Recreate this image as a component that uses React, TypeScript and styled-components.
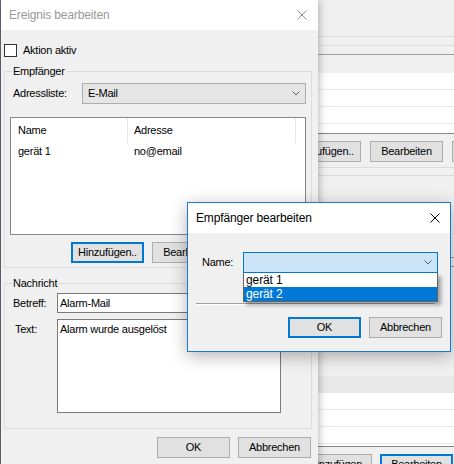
import React from "react";
import styled, { createGlobalStyle } from "styled-components";

const GlobalStyle = createGlobalStyle`
  html, body { margin: 0; padding: 0; background: #f0f0f0; }
  * { box-sizing: border-box; }
`;

const Desktop = styled.div`
  position: relative;
  width: 454px;
  height: 464px;
  overflow: hidden;
  background: #f0f0f0;
  font-family: "Liberation Sans", Arial, sans-serif;
  font-size: 11px;
  line-height: 13px;
  letter-spacing: -0.25px;
  color: #000;
`;

/* ---------- background window ---------- */
const BackWindow = styled.div`
  position: absolute;
  left: 0;
  top: 0;
  width: 480px;
  height: 464px;
  background: #f0f0f0;
  border-left: 1px solid #6e6e7c;
  display: flex;
  flex-direction: column;
`;

const BackLine = styled.div<{ $mt: number; $dark?: boolean }>`
  flex-shrink: 0;
  height: 1px;
  margin-top: ${(p) => p.$mt}px;
  background: ${(p) => (p.$dark ? "#a0a0a0" : "#dadada")};
`;

const BackBand = styled.div<{ $h: number; $mt?: number; $bg: string }>`
  flex-shrink: 0;
  height: ${(p) => p.$h}px;
  margin-top: ${(p) => p.$mt ?? 0}px;
  background: ${(p) => p.$bg};
`;

const BackList = styled.div<{ $filler: number }>`
  flex-shrink: 0;
  background: #fff;
  border-bottom: 1px solid #828790;
  display: flex;
  flex-direction: column;
  padding-bottom: ${(p) => p.$filler}px;
`;

const BackListRow = styled.div`
  height: 17px;
  border-bottom: 1px solid #e8e8e8;
`;

const ButtonRow = styled.div<{ $mt: number; $pl?: number; $pr?: number; $gap: number; $end?: boolean }>`
  flex-shrink: 0;
  display: flex;
  justify-content: ${(p) => (p.$end ? "flex-end" : "flex-start")};
  gap: ${(p) => p.$gap}px;
  margin-top: ${(p) => p.$mt}px;
  padding-left: ${(p) => p.$pl ?? 0}px;
  padding-right: ${(p) => p.$pr ?? 0}px;
`;

const Button = styled.div<{ $default?: boolean }>`
  flex-shrink: 0;
  width: 73px;
  height: 21px;
  background: #e1e1e1;
  border: ${(p) => (p.$default ? "2px solid #0078d7" : "1px solid #adadad")};
  display: flex;
  align-items: center;
  justify-content: center;
  white-space: nowrap;
`;

/* ---------- windows ---------- */
const MainDialog = styled.div`
  position: absolute;
  left: 1px;
  top: 0;
  width: 317px;
  height: 480px;
  background: #f0f0f0;
  box-shadow: 0 0 9px rgba(0, 0, 0, 0.35);
  display: flex;
  flex-direction: column;
`;

const SubDialog = styled.div`
  position: absolute;
  left: 187px;
  top: 202px;
  width: 264px;
  height: 150px;
  background: #f0f0f0;
  border: 1px solid #1c78d0;
  box-shadow: 0 4px 16px rgba(0, 0, 0, 0.3);
  display: flex;
  flex-direction: column;
`;

const TitleBar = styled.div<{ $active?: boolean; $pr: number }>`
  flex-shrink: 0;
  height: 30px;
  background: #fff;
  display: flex;
  align-items: center;
  justify-content: space-between;
  padding: 0 ${(p) => p.$pr}px 0 8px;
  font-size: 12px;
  letter-spacing: -0.15px;
  color: ${(p) => (p.$active ? "#000" : "#999")};
`;

const CloseIcon = ({ color }: { color: string }) => (
  <svg width="10" height="10" viewBox="0 0 10 10">
    <path d="M0.5 0.5 L9.5 9.5 M9.5 0.5 L0.5 9.5" stroke={color} strokeWidth="1" fill="none" />
  </svg>
);

const Chevron = () => (
  <svg width="8" height="5" viewBox="0 0 8 5">
    <path d="M0.5 0.5 L4 4 L7.5 0.5" stroke="#606060" strokeWidth="1" fill="none" />
  </svg>
);

const MainBody = styled.div`
  display: flex;
  flex-direction: column;
  padding: 14px 6px 0 3px;
`;

const CheckRow = styled.div`
  display: flex;
  align-items: center;
  gap: 6px;
  height: 13px;
`;

const CheckBox = styled.div`
  width: 13px;
  height: 13px;
  border: 1px solid #333;
  background: #fff;
`;

const Group = styled.div<{ $mt: number; $pt: number; $pb: number }>`
  position: relative;
  margin-top: ${(p) => p.$mt}px;
  border: 1px solid #dcdcdc;
  padding: ${(p) => p.$pt}px 5px ${(p) => p.$pb}px 5px;
  display: flex;
  flex-direction: column;
`;

const GroupTitle = styled.span`
  position: absolute;
  top: -7px;
  left: 7px;
  padding: 0 1px;
  background: #f0f0f0;
`;

const FieldRow = styled.div<{ $top?: boolean; $mt?: number }>`
  display: flex;
  align-items: ${(p) => (p.$top ? "flex-start" : "center")};
  margin-top: ${(p) => p.$mt ?? 0}px;
`;

const FieldLabel = styled.div<{ $w: number; $pl: number; $pt?: number }>`
  flex-shrink: 0;
  width: ${(p) => p.$w}px;
  padding-left: ${(p) => p.$pl}px;
  padding-top: ${(p) => p.$pt ?? 0}px;
`;

const ComboBox = styled.div<{ $w: number; $h: number; $focus?: boolean }>`
  position: relative;
  width: ${(p) => p.$w}px;
  height: ${(p) => p.$h}px;
  background: ${(p) => (p.$focus ? "#cce4f7" : "#e5e5e5")};
  border: 1px solid ${(p) => (p.$focus ? "#0078d7" : "#adadad")};
  display: flex;
  align-items: center;
  justify-content: space-between;
  padding: 0 5px 0 5px;
`;

const Dropdown = styled.div`
  position: absolute;
  left: -1px;
  right: -1px;
  top: 100%;
  margin-top: 1px;
  background: #fff;
  border: 1px solid #646464;
  border-top: none;
  box-shadow: 3px 3px 4px rgba(0, 0, 0, 0.35);
  display: flex;
  flex-direction: column;
`;

const DropdownItem = styled.div<{ $selected?: boolean }>`
  height: 14px;
  padding-left: 2px;
  display: flex;
  align-items: center;
  font-size: 12px;
  letter-spacing: -0.1px;
  background: ${(p) => (p.$selected ? "#0078d7" : "#fff")};
  color: ${(p) => (p.$selected ? "#fff" : "#000")};
`;

const ListView = styled.div`
  margin-top: 13px;
  height: 118px;
  border: 1px solid #828790;
  background: #fff;
  display: flex;
  flex-direction: column;
`;

const ListRow = styled.div<{ $h: number }>`
  display: flex;
  height: ${(p) => p.$h}px;
`;

const ListCell = styled.div<{ $w: number; $pl: number; $divider?: boolean }>`
  flex-shrink: 0;
  width: ${(p) => p.$w}px;
  padding-left: ${(p) => p.$pl}px;
  border-right: 1px solid ${(p) => (p.$divider ? "#e5e5e5" : "transparent")};
  display: flex;
  align-items: center;
  white-space: nowrap;
`;

const TextInput = styled.div<{ $w: number }>`
  width: ${(p) => p.$w}px;
  height: 20px;
  background: #fff;
  border: 1px solid #7a7a7a;
  padding-left: 2px;
  display: flex;
  align-items: center;
`;

const TextArea = styled.div`
  width: 224px;
  height: 94px;
  background: #fff;
  border: 1px solid #7a7a7a;
  padding: 3px 2px;
`;

const SubBody = styled.div`
  display: flex;
  flex-direction: column;
  padding: 19px 8px 0 8px;
`;

const Separator = styled.div`
  margin: 30px 7px 0 0;
  height: 2px;
  border-top: 1px solid #a0a0a0;
  border-bottom: 1px solid #ffffff;
`;

export default function App() {
  return (
    <Desktop>
      <GlobalStyle />

      <BackWindow>
        <BackLine $mt={36} />
        <BackLine $mt={8} />
        <BackLine $mt={8} $dark />
        <BackBand $h={18} $bg="#f0f0f0" />
        <BackList $filler={9}>
          <BackListRow />
          <BackListRow />
          <BackListRow />
        </BackList>
        <ButtonRow $mt={7} $pl={287} $gap={9}>
          <Button>Hinzufügen..</Button>
          <Button>Bearbeiten</Button>
          <Button>Löschen</Button>
        </ButtonRow>
        <BackLine $mt={5} />
        <BackLine $mt={7} />
        <BackLine $mt={81} $dark />
        <BackLine $mt={8} $dark />
        <BackBand $h={17} $mt={109} $bg="#e9e9e9" />
        <BackList $filler={2}>
          <BackListRow />
          <BackListRow />
          <BackListRow />
        </BackList>
        <ButtonRow $mt={7} $pl={298} $gap={8}>
          <Button>Hinzufügen</Button>
          <Button $default>Bearbeiten</Button>
        </ButtonRow>
      </BackWindow>

      <MainDialog>
        <TitleBar $pr={11}>
          <span>Ereignis bearbeiten</span>
          <CloseIcon color="#8c8c8c" />
        </TitleBar>
        <MainBody>
          <CheckRow>
            <CheckBox />
            <span>Aktion aktiv</span>
          </CheckRow>

          <Group $mt={14} $pt={11} $pb={4}>
            <GroupTitle>Empfänger</GroupTitle>
            <FieldRow>
              <FieldLabel $w={72} $pl={3}>Adressliste:</FieldLabel>
              <ComboBox $w={224} $h={21}>
                <span>E-Mail</span>
                <Chevron />
              </ComboBox>
            </FieldRow>
            <ListView>
              <ListRow $h={25}>
                <ListCell $w={117} $pl={7} $divider>Name</ListCell>
                <ListCell $w={168} $pl={6} $divider>Adresse</ListCell>
              </ListRow>
              <ListRow $h={17}>
                <ListCell $w={117} $pl={7}>gerät 1</ListCell>
                <ListCell $w={168} $pl={6}>no@email</ListCell>
              </ListRow>
            </ListView>
            <ButtonRow $mt={7} $gap={8} $end>
              <Button $default>Hinzufügen..</Button>
              <Button>Bearbeiten</Button>
              <Button>Löschen</Button>
            </ButtonRow>
          </Group>

          <Group $mt={15} $pt={9} $pb={15}>
            <GroupTitle>Nachricht</GroupTitle>
            <FieldRow>
              <FieldLabel $w={47} $pl={3}>Betreff:</FieldLabel>
              <TextInput $w={249}>Alarm-Mail</TextInput>
            </FieldRow>
            <FieldRow $top $mt={6}>
              <FieldLabel $w={47} $pl={5} $pt={4}>Text:</FieldLabel>
              <TextArea>Alarm wurde ausgelöst</TextArea>
            </FieldRow>
          </Group>

          <ButtonRow $mt={8} $gap={8} $pr={1} $end>
            <Button>OK</Button>
            <Button>Abbrechen</Button>
          </ButtonRow>
        </MainBody>
      </MainDialog>

      <SubDialog>
        <TitleBar $active $pr={10}>
          <span>Empfänger bearbeiten</span>
          <CloseIcon color="#000" />
        </TitleBar>
        <SubBody>
          <FieldRow>
            <FieldLabel $w={47} $pl={6}>Name:</FieldLabel>
            <ComboBox $w={195} $h={21} $focus>
              <span />
              <Chevron />
              <Dropdown>
                <DropdownItem>gerät 1</DropdownItem>
                <DropdownItem $selected>gerät 2</DropdownItem>
              </Dropdown>
            </ComboBox>
          </FieldRow>
          <Separator />
          <ButtonRow $mt={12} $gap={8} $end>
            <Button $default>OK</Button>
            <Button>Abbrechen</Button>
          </ButtonRow>
        </SubBody>
      </SubDialog>
    </Desktop>
  );
}
